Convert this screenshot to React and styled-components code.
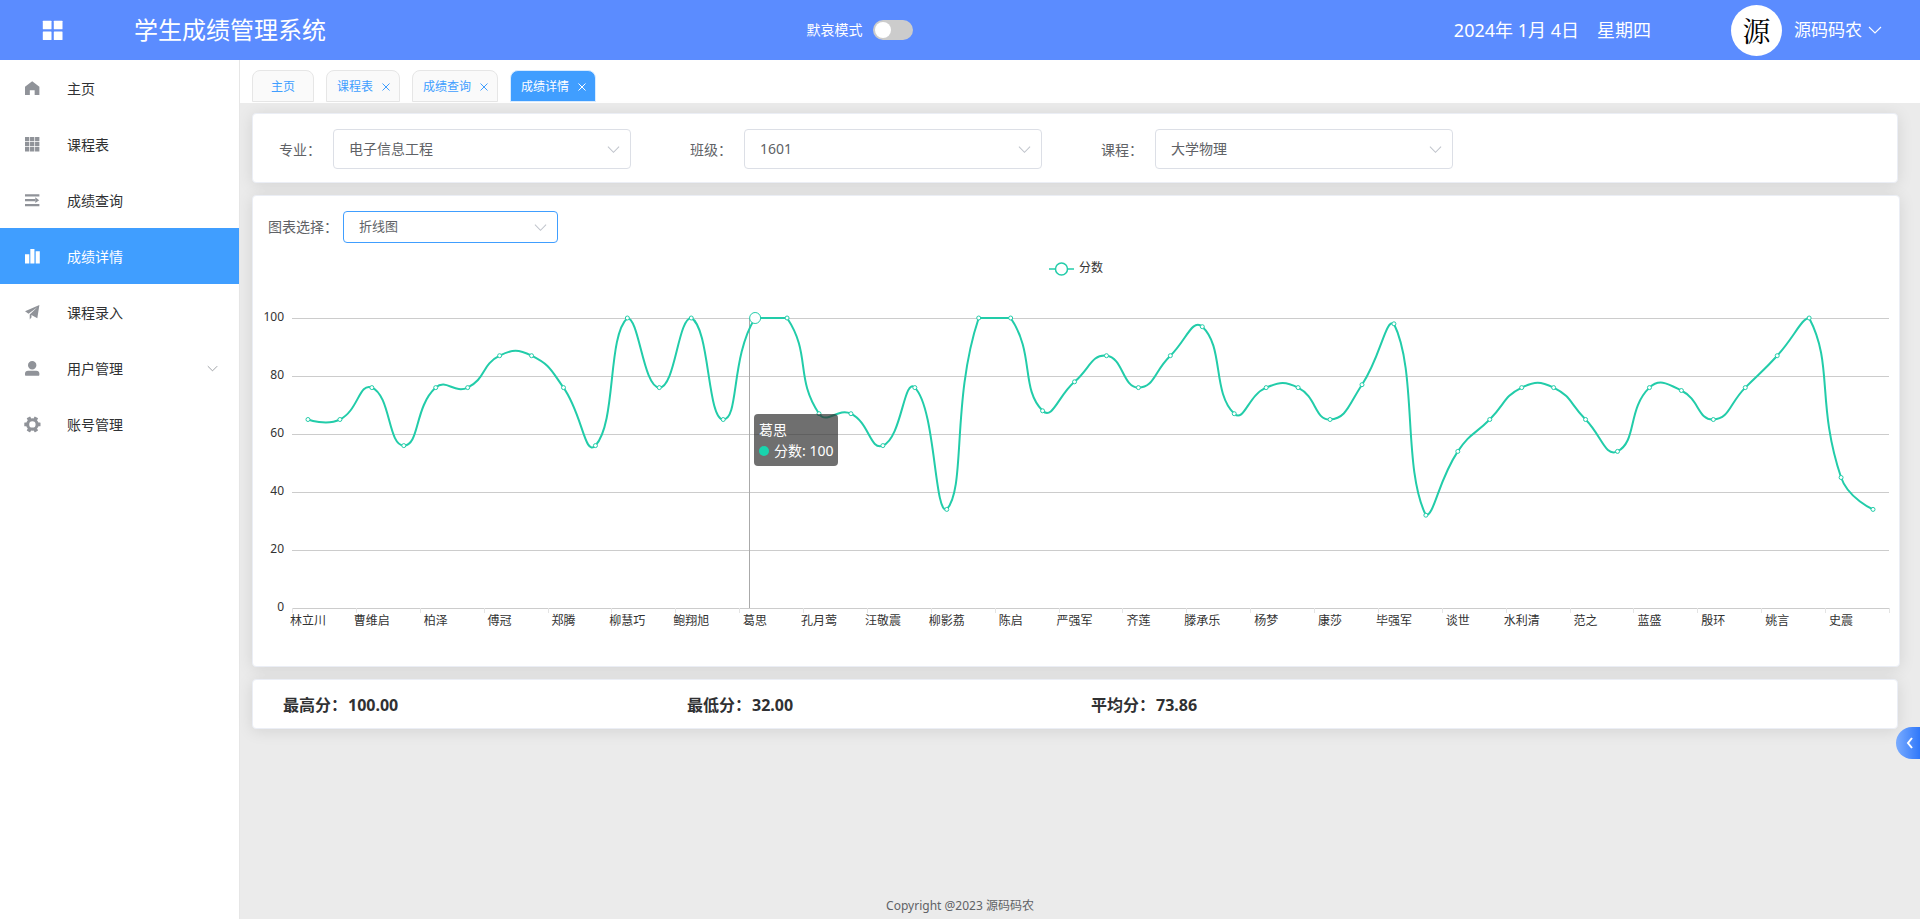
import React, { useLayoutEffect, useRef, useState } from "react";
import styled, { createGlobalStyle } from "styled-components";

const GlobalStyle = createGlobalStyle`
    * {
        box-sizing: border-box;
    }

    body {
        margin: 0;
        background-color: #ebebeb;
        color: #303133;
        font-family: "Noto Sans", "Noto Sans CJK SC", sans-serif;
        font-size: 14px;
    }

    button, select, input {
        font-family: inherit;
    }

    a {
        color: inherit;
        text-decoration: none;
    }
`;

const Page = styled.div`
    min-height: 100vh;
    display: flex;
    flex-direction: column;
`;

const Header = styled.header`
    height: 60px;
    display: grid;
    grid-template-columns: 42% 1fr auto;
    align-items: center;
    background-color: #5b8cff;
    color: #fff;
`;

const Brand = styled.div`
    display: flex;
    align-items: center;
    padding-left: 42px;
`;

const IconButton = styled.button`
    display: flex;
    padding: 0;
    border: none;
    background: none;
    color: inherit;
    cursor: pointer;
`;

const Title = styled.h1`
    margin: 0 0 0 71px;
    font-size: 24px;
    line-height: 32px;
    font-weight: 400;
`;

const SwitchLabel = styled.label`
    display: flex;
    align-items: center;
    gap: 11px;
    line-height: 20px;
`;

const Switch = styled.input`
    appearance: none;
    width: 40px;
    height: 20px;
    margin: 0;
    padding: 2px;
    border-radius: 10px;
    background-color: ${(props) => (props.checked ? "#409eff" : "#ccc")};
    cursor: pointer;

    &::before {
        content: "";
        display: block;
        width: 16px;
        height: 16px;
        margin-left: ${(props) => (props.checked ? "20px" : "0")};
        border-radius: 50%;
        background-color: #fff;
    }
`;

const HeaderRight = styled.div`
    display: flex;
    align-items: center;
    padding-right: 38px;
`;

const Today = styled.div`
    display: flex;
    gap: 18px;
    margin-right: 80px;
    font-size: 18px;
    line-height: 24px;
`;

const Avatar = styled.div`
    width: 51px;
    height: 51px;
    margin-right: 12px;
    display: flex;
    align-items: center;
    justify-content: center;
    border-radius: 50%;
    background-color: #fff;
    color: #000;
    font-family: "Noto Serif CJK SC", "Noto Sans CJK SC", serif;
    font-size: 28px;
    line-height: 32px;
`;

const UserMenu = styled.button`
    display: flex;
    align-items: center;
    gap: 6px;
    padding: 0;
    border: none;
    background: none;
    color: inherit;
    font-size: 17px;
    line-height: 24px;
    cursor: pointer;
`;

const Body = styled.div`
    flex: 1;
    display: flex;
`;

const Sidebar = styled.nav`
    width: 240px;
    flex-shrink: 0;
    border-right: 1px solid #e6e6e6;
    background-color: #fff;
`;

const MenuItem = styled.a`
    height: 56px;
    display: flex;
    align-items: center;
    gap: 27px;
    padding: 0 21px 0 25px;
    background-color: ${(props) => (props.$active ? "#409eff" : "transparent")};
    color: ${(props) => (props.$active ? "#fff" : "#303133")};

    & > svg {
        color: ${(props) => (props.$active ? "#fff" : "#909399")};
    }

    & > svg:last-child {
        margin-left: auto;
    }
`;

const Main = styled.main`
    flex: 1;
    min-width: 0;
    display: flex;
    flex-direction: column;
`;

const TabBar = styled.div`
    display: flex;
    gap: 12px;
    padding: 10px 12px 1px;
    background-color: #fff;
`;

const Tab = styled.div`
    height: 32px;
    display: flex;
    align-items: center;
    gap: 5px;
    padding: ${(props) => (props.$closable ? "2px 5px 0 10px" : "2px 18px 0")};
    border: 1px solid ${(props) => (props.$active ? "#d9ecff" : "#e6e6e6")};
    border-radius: 8px 8px 0 0;
    background-color: ${(props) => (props.$active ? "#409eff" : "#fafafa")};
    color: ${(props) => (props.$active ? "#fff" : "#409eff")};
    font-size: 12px;
    line-height: 16px;
`;

const CloseButton = styled(IconButton)`
    width: 16px;
    height: 16px;
    align-items: center;
    justify-content: center;
`;

const Content = styled.div`
    flex: 1;
    display: flex;
    flex-direction: column;
    gap: 12px;
    padding: 10px 22px 12px 12px;
`;

const Card = styled.section`
    border: 1px solid #ebeef5;
    border-radius: 4px;
    background-color: #fff;
    box-shadow: 0 2px 16px rgba(0, 0, 0, 0.1);
`;

const FilterCard = styled(Card)`
    display: grid;
    grid-template-columns: repeat(4, 1fr);
    padding: 15px 0 13px;
`;

const FormItem = styled.div`
    display: flex;
    align-items: center;
    padding-right: 33px;
`;

const FormLabel = styled.label`
    width: 80px;
    flex-shrink: 0;
    padding-right: 12px;
    color: #606266;
    text-align: right;
`;

const SelectBox = styled.div`
    position: relative;
    flex: 1;
    max-width: ${(props) => (props.$small ? "215px" : "none")};

    & > svg {
        position: absolute;
        top: 0;
        bottom: 0;
        right: 11px;
        margin: auto 0;
        color: #c0c4cc;
        pointer-events: none;
    }
`;

const SelectInput = styled.select`
    appearance: none;
    display: block;
    width: 100%;
    height: ${(props) => (props.$small ? "32px" : "40px")};
    padding: 0 30px 2px 15px;
    border: 1px solid ${(props) => (props.$small ? "#409eff" : "#dcdfe6")};
    border-radius: 4px;
    outline: none;
    background-color: #fff;
    color: #606266;
    font-size: ${(props) => (props.$small ? "13px" : "14px")};
`;

const ChartCard = styled(Card)`
    margin-right: -2px;
    padding: 15px 7px 23px;
`;

const ChartToolbar = styled.div`
    display: flex;
    align-items: center;
    gap: 5px;
    padding-left: 8px;
    color: #606266;

    & > label {
        padding-bottom: 2px;
    }
`;

const ChartBox = styled.div`
    position: relative;
    height: 400px;

    & > svg {
        display: block;
    }

    & text {
        font-size: 12px;
        fill: #333;
    }
`;

const Tooltip = styled.div`
    position: absolute;
    padding: 5px;
    border-radius: 4px;
    background-color: rgba(50, 50, 50, 0.7);
    color: #fff;
    line-height: 21px;
    white-space: nowrap;
`;

const TooltipRow = styled.div`
    display: flex;
    align-items: center;
    gap: 5px;
`;

const Dot = styled.span`
    width: 10px;
    height: 10px;
    border-radius: 50%;
    background-color: #19d4ae;
`;

const StatCard = styled(Card)`
    display: grid;
    grid-template-columns: repeat(4, 1fr);
    padding: 13px 14px 11px;
    font-size: 16px;
    line-height: 24px;
    font-weight: 700;
`;

const Stat = styled.div`
    display: flex;
    gap: 1px;
    padding-left: 16px;
`;

const Footer = styled.footer`
    padding: 0 240px 3px 0;
    color: #606266;
    font-size: 12px;
    line-height: 20px;
    text-align: center;
`;

const Drawer = styled.button`
    position: fixed;
    top: 727px;
    right: 0;
    width: 24px;
    height: 32px;
    display: flex;
    align-items: center;
    justify-content: flex-end;
    padding: 0 7px 0 0;
    border: none;
    border-radius: 16px 0 0 16px;
    background: linear-gradient(90deg, #7aacff, #3078fa);
    color: #fff;
    cursor: pointer;
`;

const Chevron = ({ size = 14 }) => (
    <svg width={size} height={size} viewBox="0 0 14 14" fill="none" stroke="currentColor" strokeWidth="1.1">
        <path d="M1 4l6 6 6-6" />
    </svg>
);

const CloseIcon = () => (
    <svg width="8" height="8" viewBox="0 0 8 8" stroke="currentColor" strokeWidth="1">
        <path d="M0.5 0.5l7 7M7.5 0.5l-7 7" />
    </svg>
);

const GridIcon = () => (
    <svg width="21" height="20" viewBox="0 0 21 20" fill="currentColor">
        <rect x="0.8" y="0.8" width="8.7" height="8.5" rx="0.5" />
        <rect x="11.8" y="0.8" width="8.7" height="8.5" rx="0.5" />
        <rect x="0.8" y="11.5" width="8.7" height="8.5" rx="0.5" />
        <rect x="11.8" y="11.5" width="8.7" height="8.5" rx="0.5" />
    </svg>
);

const menuIcons = {
    home: <path d="M7 0.3L14 5.6V13.6H9.4V9H4.7V13.6H0V5.6Z" />,
    grid: (
        <path d="M0 0h4.2v4.2H0zM4.9 0h4.2v4.2H4.9zM9.8 0H14v4.2H9.8zM0 4.9h4.2v4.2H0zM4.9 4.9h4.2v4.2H4.9zM9.8 4.9H14v4.2H9.8zM0 9.8h4.2V14H0zM4.9 9.8h4.2V14H4.9zM9.8 9.8H14V14H9.8z" />
    ),
    list: <path d="M0 1.2h14v2.2H0zM0 5.9h9.8v2.2H0zM0 10.6h14v2.2H0zM10 4.2L13.8 7 10 9.8z" />,
    data: <path d="M0 5h4.2v9H0zM5.2 0h4v14h-4zM10.4 2.2h4V14h-4z" />,
    send: <path d="M14 0L0 6.2l3.4 2.2L12 2.2 4.6 9.3V14l2.2-2.6-1.2-.7 1.1-.8L12 13z" />,
    user: (
        <path d="M7 0a4 4 0 0 1 0 8.2A4 4 0 0 1 7 0zM3 9.4h8c1.9 0 3 1.2 3 2.8v1c0 .8-.3 1.2-.9 1.2H.9c-.6 0-.9-.4-.9-1.2v-1c0-1.6 1.1-2.8 3-2.8z" />
    ),
    setting: (
        <g>
            <circle cx="7.2" cy="7.2" r="4.6" fill="none" stroke="currentColor" strokeWidth="3" />
            {[0, 60, 120, 180, 240, 300].map((angle) => (
                <rect
                    key={angle}
                    x="12.4"
                    y="5.3"
                    width="2.7"
                    height="3.8"
                    rx="0.5"
                    transform={`rotate(${angle} 7.2 7.2)`}
                />
            ))}
        </g>
    ),
};

const MenuIcon = ({ name }) => (
    <svg width="15" height="15" viewBox="0 0 14.6 14.6" overflow="visible" fill="currentColor">
        {menuIcons[name]}
    </svg>
);

const menu = [
    { name: "主页", icon: "home" },
    { name: "课程表", icon: "grid" },
    { name: "成绩查询", icon: "list" },
    { name: "成绩详情", icon: "data", active: true },
    { name: "课程录入", icon: "send" },
    { name: "用户管理", icon: "user", children: true },
    { name: "账号管理", icon: "setting" },
];

const tabs = [
    { name: "主页" },
    { name: "课程表", closable: true },
    { name: "成绩查询", closable: true },
    { name: "成绩详情", closable: true, active: true },
];

const filters = [
    { id: "major", label: "专业：", value: "电子信息工程" },
    { id: "class", label: "班级：", value: "1601" },
    { id: "course", label: "课程：", value: "大学物理" },
];

const scores = [
    65, 65, 76, 56, 76, 76, 87, 87, 76, 56, 100, 76, 100, 65, 100, 100, 67, 67, 56, 76, 34, 100, 100, 68, 78,
    87, 76, 87, 97, 67, 76, 76, 65, 77, 98, 32, 54, 65, 76, 76, 65, 54, 76, 75, 65, 76, 87, 100, 45, 34,
];

// only every second student gets a label on the axis
const names = [
    "林立川", "曹维启", "柏泽", "傅冠", "郑腾", "柳慧巧", "鲍翔旭", "葛思", "孔月莺", "汪敬震", "柳影荔", "陈启", "严强军",
    "齐莲", "滕承乐", "杨梦", "康莎", "毕强军", "谈世", "水利清", "范之", "蓝盛", "殷环", "姚言", "史震",
];

const average = scores.reduce((sum, s) => sum + s, 0) / scores.length;

const stats = [
    { label: "最高分：", value: Math.max(...scores) },
    { label: "最低分：", value: Math.min(...scores) },
    { label: "平均分：", value: average },
];

const TOP = 75;
const BOTTOM = 365;
const LEFT = 32;
const RIGHT = 3;

// smooth path, control points never leave the value range of the series
function smoothPath(points) {
    const ys = points.map((p) => p[1]);
    const minY = Math.min(...ys);
    const maxY = Math.max(...ys);
    const clamp = (p) => [p[0], Math.min(maxY, Math.max(minY, p[1]))];
    const dist = (a, b) => Math.hypot(a[0] - b[0], a[1] - b[1]);

    let d = `M${points[0].join(" ")}`;
    let cp0 = points[0];
    for (let i = 1; i < points.length; i++) {
        const prev = points[i - 1];
        const p = points[i];
        const next = points[i + 1];
        let cp1 = p;
        let nextCp = p;
        if (next) {
            const v = [next[0] - prev[0], next[1] - prev[1]];
            const ratio = dist(p, next) / (dist(p, next) + dist(p, prev));
            cp1 = [p[0] - v[0] * 0.5 * (1 - ratio), p[1] - v[1] * 0.5 * (1 - ratio)];
            nextCp = [p[0] + v[0] * 0.5 * ratio, p[1] + v[1] * 0.5 * ratio];
        }
        d += `C${clamp(cp0).join(" ")} ${clamp(cp1).join(" ")} ${p.join(" ")}`;
        cp0 = nextCp;
    }
    return d;
}

function ScoreChart() {
    const boxRef = useRef();
    const [width, setWidth] = useState(1632);
    const active = 14;

    useLayoutEffect(() => {
        const measure = () => setWidth(boxRef.current.clientWidth);
        measure();
        window.addEventListener("resize", measure);
        return () => window.removeEventListener("resize", measure);
    }, []);

    const step = (width - LEFT - RIGHT) / scores.length;
    const yOf = (score) => BOTTOM - (score * (BOTTOM - TOP)) / 100;
    const points = scores.map((score, i) => [LEFT + step * (i + 0.5), yOf(score)]);
    const [activeX, activeY] = points[active];
    const pointerX = Math.round(activeX) - 5.5;
    const middle = Math.round(width / 2);

    return (
        <ChartBox ref={boxRef}>
            <svg width={width} height="400" role="img" aria-label="分数">
                <g stroke="#22cca9" strokeWidth="1.5" fill="#fff">
                    <path d={`M${middle - 27} 26H${middle - 2}`} />
                    <circle cx={middle - 14.5} cy="26" r="6" />
                </g>
                <text x={middle + 3} y="29">分数</text>

                {[0, 20, 40, 60, 80, 100].map((v) => (
                    <g key={v}>
                        <path d={`M${LEFT} ${yOf(v) + 0.5}H${width - RIGHT}`} stroke="#ccc" />
                        <text x={LEFT - 8} y={yOf(v) + 3} textAnchor="end">{v}</text>
                    </g>
                ))}

                {names.map((name, i) => (
                    <g key={name}>
                        <path d={`M${Math.round(LEFT + step * 2 * i) + 0.5} ${BOTTOM}v5`} stroke="#e4e4e4" />
                        <text x={points[i * 2][0]} y={BOTTOM + 17} textAnchor="middle">{name}</text>
                    </g>
                ))}
                <path d={`M${width - RIGHT + 0.5} ${BOTTOM}v5`} stroke="#e4e4e4" />

                <path d={`M${pointerX} ${TOP}V${BOTTOM}`} stroke="#aaa" />
                <path d={smoothPath(points)} fill="none" stroke="#22cca9" strokeWidth="2" />
                {points.map(([x, y], i) => (
                    <circle
                        key={i}
                        cx={x}
                        cy={y}
                        r={i === active ? 5.5 : 2}
                        fill="#fff"
                        stroke="#22cca9"
                        strokeWidth="1"
                    />
                ))}
            </svg>
            <Tooltip style={{ left: Math.round(activeX) - 1, top: activeY + 96 }}>
                <div>{names[active / 2]}</div>
                <TooltipRow>
                    <Dot />
                    <span>分数: {scores[active]}</span>
                </TooltipRow>
            </Tooltip>
        </ChartBox>
    );
}

function Select({ id, value, options = [value], small }) {
    const [current, setCurrent] = useState(value);
    return (
        <SelectBox $small={small}>
            <SelectInput id={id} $small={small} value={current} onChange={(e) => setCurrent(e.target.value)}>
                {options.map((o) => (
                    <option key={o}>{o}</option>
                ))}
            </SelectInput>
            <Chevron size={13} />
        </SelectBox>
    );
}

export default function App() {
    const [mourning, setMourning] = useState(false);

    return (
        <Page>
            <GlobalStyle />
            <Header>
                <Brand>
                    <IconButton aria-label="菜单">
                        <GridIcon />
                    </IconButton>
                    <Title>学生成绩管理系统</Title>
                </Brand>
                <SwitchLabel>
                    默哀模式
                    <Switch type="checkbox" checked={mourning} onChange={(e) => setMourning(e.target.checked)} />
                </SwitchLabel>
                <HeaderRight>
                    <Today>
                        <span>2024年 1月 4日</span>
                        <span>星期四</span>
                    </Today>
                    <Avatar>源</Avatar>
                    <UserMenu>
                        源码码农
                        <Chevron />
                    </UserMenu>
                </HeaderRight>
            </Header>
            <Body>
                <Sidebar>
                    {menu.map((item) => (
                        <MenuItem key={item.name} href="#" $active={item.active}>
                            <MenuIcon name={item.icon} />
                            <span>{item.name}</span>
                            {item.children && <Chevron size={11} />}
                        </MenuItem>
                    ))}
                </Sidebar>
                <Main>
                    <TabBar>
                        {tabs.map((tab) => (
                            <Tab key={tab.name} $active={tab.active} $closable={tab.closable}>
                                <a href="#">{tab.name}</a>
                                {tab.closable && (
                                    <CloseButton aria-label="关闭">
                                        <CloseIcon />
                                    </CloseButton>
                                )}
                            </Tab>
                        ))}
                    </TabBar>
                    <Content>
                        <FilterCard>
                            {filters.map((f) => (
                                <FormItem key={f.id}>
                                    <FormLabel htmlFor={f.id}>{f.label}</FormLabel>
                                    <Select id={f.id} value={f.value} />
                                </FormItem>
                            ))}
                        </FilterCard>
                        <ChartCard>
                            <ChartToolbar>
                                <label htmlFor="chart">图表选择：</label>
                                <Select id="chart" value="折线图" options={["折线图", "柱状图"]} small />
                            </ChartToolbar>
                            <ScoreChart />
                        </ChartCard>
                        <StatCard>
                            {stats.map((s) => (
                                <Stat key={s.label}>
                                    <span>{s.label}</span>
                                    <span>{s.value.toFixed(2)}</span>
                                </Stat>
                            ))}
                        </StatCard>
                    </Content>
                    <Footer>Copyright @2023 源码码农</Footer>
                </Main>
            </Body>
            <Drawer aria-label="展开">
                <svg width="7" height="12" viewBox="0 0 7 12" fill="none" stroke="currentColor" strokeWidth="2">
                    <path d="M6 1L2 6l4 5" />
                </svg>
            </Drawer>
        </Page>
    );
}
